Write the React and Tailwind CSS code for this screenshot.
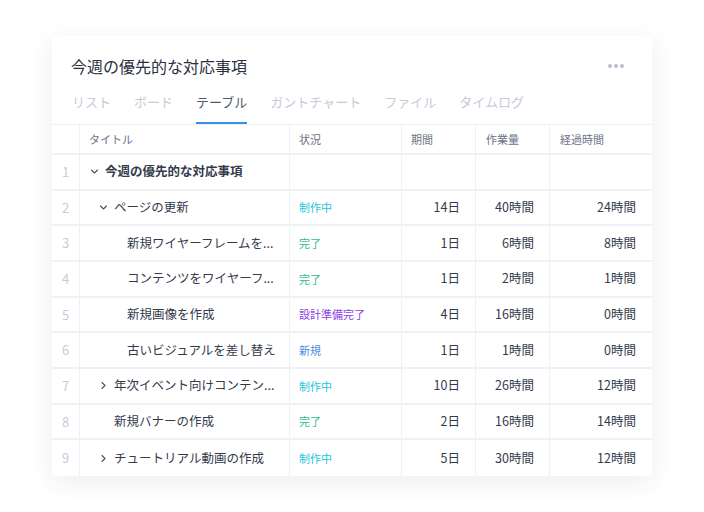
const font = { fontFamily: '"Noto Sans CJK JP", "Noto Sans", sans-serif' }

const tabs = ['リスト', 'ボード', 'テーブル', 'ガントチャート', 'ファイル', 'タイムログ']

const statusColor = {
  制作中: 'text-[#1fc3dc]',
  完了: 'text-[#2bc089]',
  設計準備完了: 'text-[#8a3ce6]',
  新規: 'text-[#4a8fe2]',
}

const rows = [
  { n: 1, title: '今週の優先的な対応事項', level: 0, chevron: 'down', bold: true },
  { n: 2, title: 'ページの更新', level: 1, chevron: 'down', status: '制作中', d: '14日', w: '40時間', e: '24時間' },
  { n: 3, title: '新規ワイヤーフレームを...', level: 2, status: '完了', d: '1日', w: '6時間', e: '8時間' },
  { n: 4, title: 'コンテンツをワイヤーフ...', level: 2, status: '完了', d: '1日', w: '2時間', e: '1時間' },
  { n: 5, title: '新規画像を作成', level: 2, status: '設計準備完了', d: '4日', w: '16時間', e: '0時間' },
  { n: 6, title: '古いビジュアルを差し替え', level: 2, status: '新規', d: '1日', w: '1時間', e: '0時間' },
  { n: 7, title: '年次イベント向けコンテン...', level: 1, chevron: 'right', status: '制作中', d: '10日', w: '26時間', e: '12時間' },
  { n: 8, title: '新規バナーの作成', level: 1, status: '完了', d: '2日', w: '16時間', e: '14時間' },
  { n: 9, title: 'チュートリアル動画の作成', level: 1, chevron: 'right', status: '制作中', d: '5日', w: '30時間', e: '12時間' },
]

function Chevron({ dir }) {
  return (
    <svg width="9" height="9" viewBox="0 0 9 9" fill="none" stroke="#4a5163" strokeWidth="1.1" strokeLinecap="round" strokeLinejoin="round">
      {dir === 'down' ? <path d="M1.5 3l3 3 3-3" /> : <path d="M3 1.5l3 3-3 3" />}
    </svg>
  )
}

const grid = 'grid grid-cols-[28px_210px_112px_74px_74px_102px]'
const cell = 'border-r border-[#eef0f6] flex items-center'

export default function App() {
  return (
    <div className="min-h-screen bg-white pt-[36px] pl-[52px]" style={font}>
      <div className="w-[600px] bg-white rounded-[4px] shadow-[0_6px_24px_rgba(40,50,90,0.09)] overflow-hidden">
        {/* Header */}
        <div className="flex items-center justify-between pl-[19px] pr-[28px] pt-[19px] pb-[2px]">
          <h1 className="text-[16px] leading-[22px] text-[#2b3040]">今週の優先的な対応事項</h1>
          <div className="flex gap-[2px]">
            <span className="w-[4px] h-[4px] rounded-full bg-[#b9bfd0]" />
            <span className="w-[4px] h-[4px] rounded-full bg-[#b9bfd0]" />
            <span className="w-[4px] h-[4px] rounded-full bg-[#b9bfd0]" />
          </div>
        </div>

        {/* Tabs */}
        <div className="flex gap-[23px] pl-[20px] mt-[11px] h-[34px]">
          {tabs.map((t, i) => (
            <div key={t} className="flex flex-col justify-between">
              <span className={`text-[13px] leading-[18px] pt-[3px] ${i === 2 ? 'text-[#505a6e]' : 'text-[#c6cbd7]'}`}>{t}</span>
              {i === 2 ? <span className="h-[2px] bg-[#3a8ee3]" /> : <span className="h-[2px]" />}
            </div>
          ))}
        </div>

        {/* Table */}
        <div className="border-t border-[#eef0f6]">
          <div className={`${grid} h-[30px] border-b-2 border-[#f0f1f7] text-[11px] text-[#6b7385]`}>
            <div className={cell} />
            <div className={`${cell} pl-[9px]`}>タイトル</div>
            <div className={`${cell} pl-[9px]`}>状況</div>
            <div className={`${cell} pl-[9px]`}>期間</div>
            <div className={`${cell} pl-[10px]`}>作業量</div>
            <div className="flex items-center pl-[10px]">経過時間</div>
          </div>
          {rows.map((r, i) => (
            <div
              key={r.n}
              className={`${grid} h-[35.67px] text-[12.5px] text-[#333a4c] ${i < rows.length - 1 ? 'border-b-2 border-[#f0f1f7]' : ''}`}
            >
              <div className={`${cell} justify-center text-[13px] text-[#c8ccd7]`}>{r.n}</div>
              <div
                className={`${cell} ${r.level === 0 ? 'pl-[10px]' : r.level === 1 ? 'pl-[19px]' : 'pl-[47px]'} ${r.bold ? 'font-bold' : ''}`}
              >
                {r.chevron ? (
                  <span className="w-[15px] flex items-center">
                    <Chevron dir={r.chevron} />
                  </span>
                ) : r.level === 1 ? (
                  <span className="w-[15px]" />
                ) : null}
                <span className="whitespace-nowrap">{r.title}</span>
              </div>
              <div className={`${cell} pl-[9px] text-[11px] ${statusColor[r.status] || ''}`}>{r.status}</div>
              <div className={`${cell} justify-end pr-[15px]`}>{r.d}</div>
              <div className={`${cell} justify-end pr-[15px]`}>{r.w}</div>
              <div className="flex items-center justify-end pr-[16px]">{r.e}</div>
            </div>
          ))}
        </div>
      </div>
    </div>
  )
}
